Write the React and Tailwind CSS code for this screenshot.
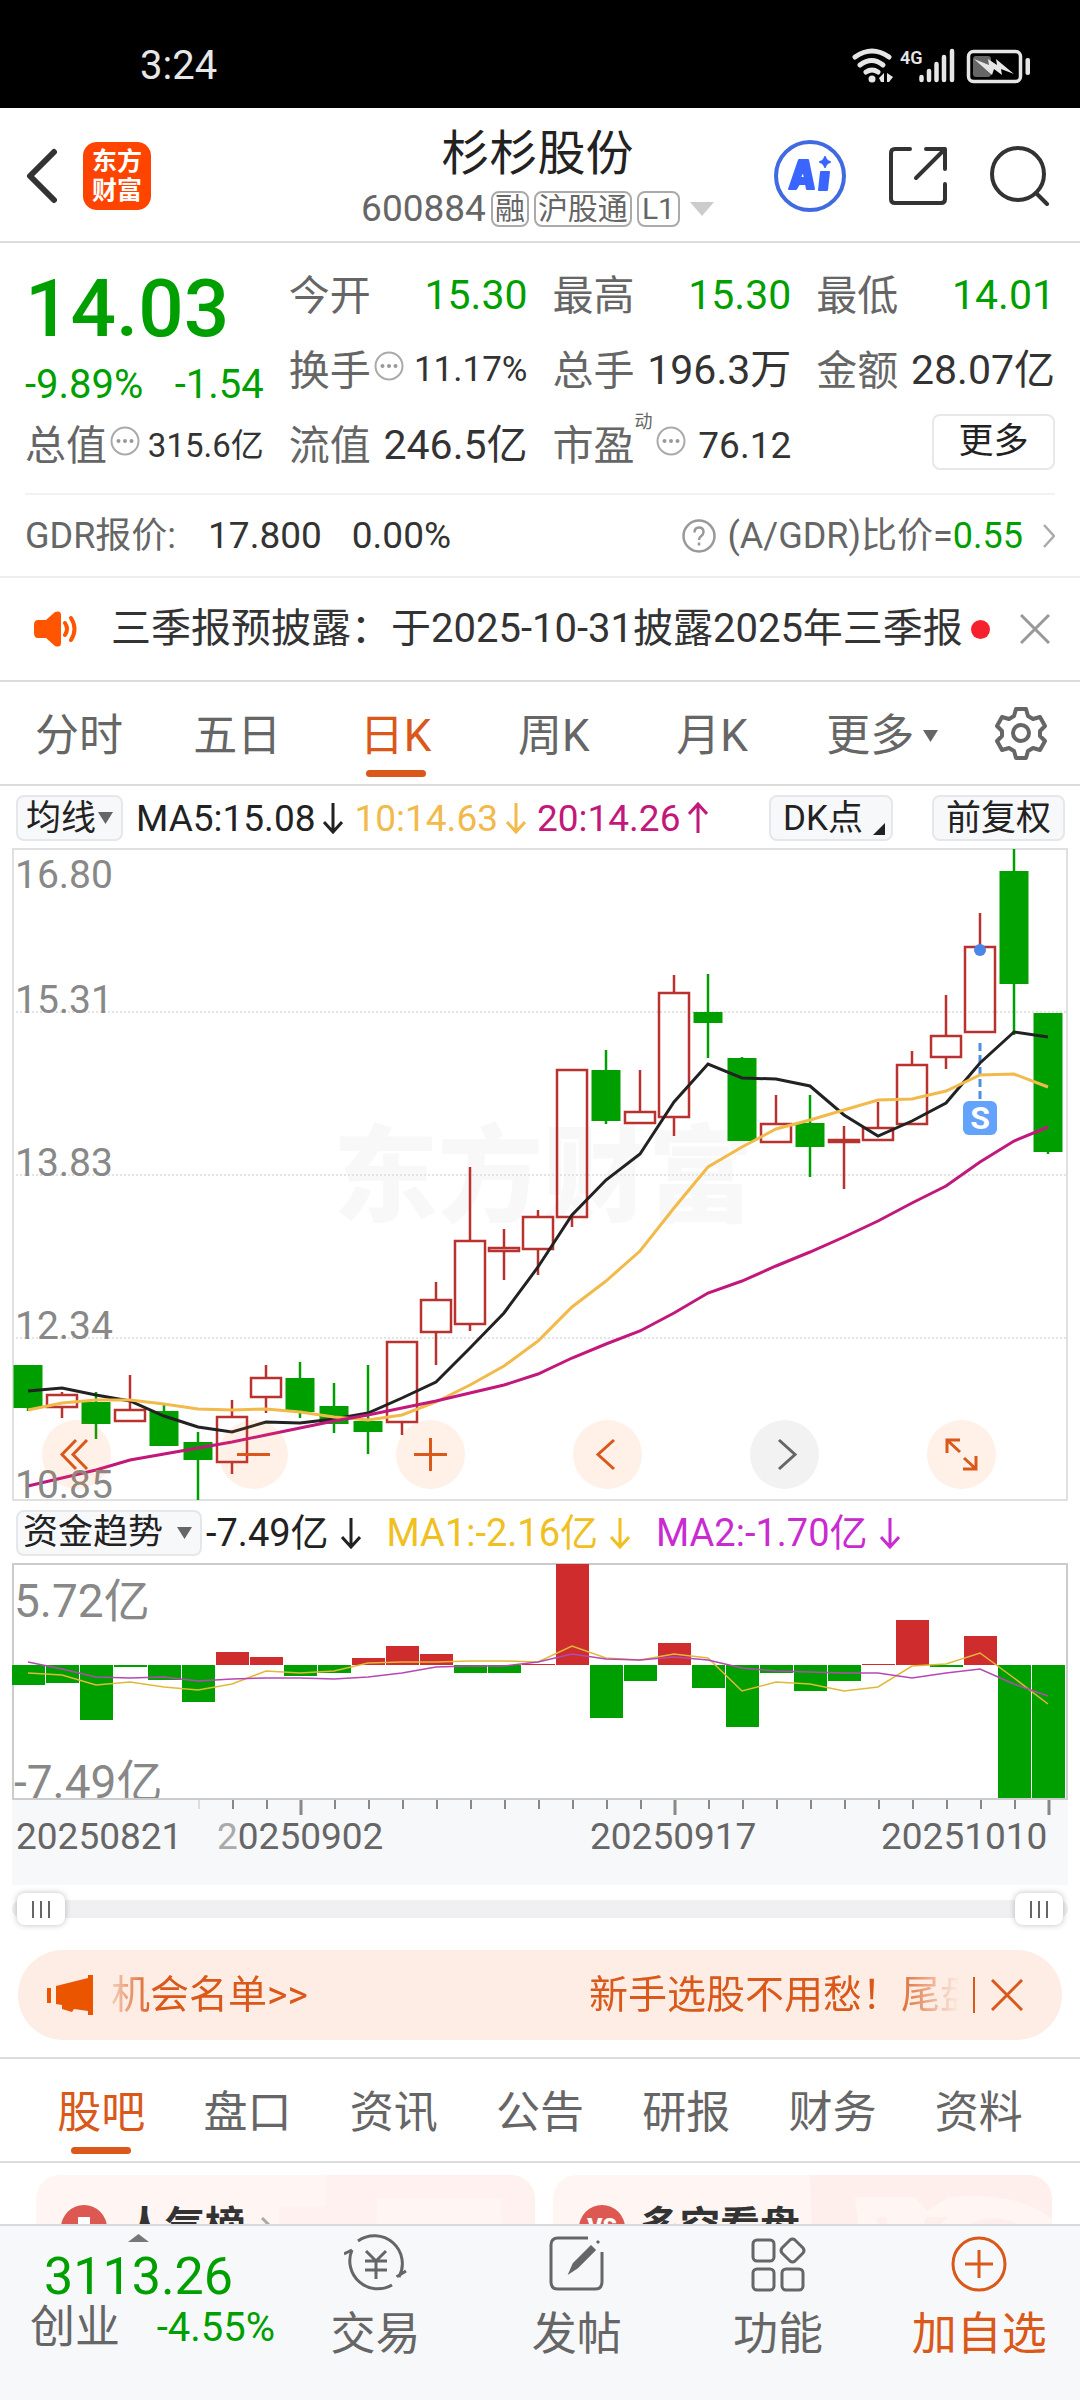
import { useState } from 'react';

const GREEN = '#009f00';
const RED = '#b8322f';

// [color, top, bottom, high, low] in chart pixels, one entry per trading day
const CANDLES = [
  ['g', 1365, 1408, 1365, 1411], ['r', 1395, 1407, 1392, 1418], ['g', 1402, 1424, 1392, 1439],
  ['r', 1410, 1421, 1375, 1421], ['g', 1411, 1446, 1405, 1446], ['g', 1442, 1460, 1432, 1500],
  ['r', 1417, 1462, 1400, 1474], ['r', 1378, 1397, 1365, 1413], ['g', 1378, 1412, 1362, 1418],
  ['g', 1406, 1424, 1383, 1433], ['g', 1421, 1432, 1365, 1454], ['r', 1342, 1422, 1342, 1435],
  ['r', 1300, 1332, 1282, 1365], ['r', 1241, 1324, 1167, 1331], ['r', 1248, 1251, 1229, 1280],
  ['r', 1217, 1249, 1210, 1275], ['r', 1070, 1217, 1070, 1227], ['g', 1070, 1121, 1050, 1124],
  ['r', 1112, 1123, 1070, 1123], ['r', 993, 1117, 975, 1136], ['g', 1012, 1023, 974, 1058],
  ['g', 1058, 1141, 1057, 1141], ['r', 1124, 1142, 1095, 1142], ['g', 1123, 1147, 1095, 1177],
  ['r', 1140, 1142, 1126, 1189], ['r', 1128, 1140, 1102, 1140], ['r', 1065, 1124, 1051, 1124],
  ['r', 1036, 1057, 995, 1069], ['r', 947, 1032, 913, 1032], ['g', 871, 984, 849, 1035],
  ['g', 1013, 1152, 1013, 1154],
];
const MA5 = [1391, 1388, 1395, 1401, 1416, 1427, 1432, 1422, 1423, 1419, 1413, 1398, 1382, 1348, 1313, 1267, 1215, 1180, 1154, 1102, 1064, 1078, 1079, 1086, 1115, 1136, 1121, 1103, 1063, 1032, 1037];
const MA10 = [1410, 1403, 1400, 1400, 1404, 1409, 1410, 1409, 1412, 1417, 1420, 1415, 1402, 1385, 1366, 1341, 1307, 1281, 1251, 1208, 1167, 1147, 1129, 1120, 1110, 1100, 1099, 1091, 1075, 1074, 1087];
const MA20 = [1486, 1478, 1470, 1460, 1454, 1448, 1442, 1435, 1428, 1421, 1415, 1408, 1401, 1393, 1385, 1374, 1358, 1344, 1331, 1313, 1293, 1281, 1266, 1252, 1237, 1221, 1203, 1186, 1162, 1141, 1127];

const FLOW = [1685, 1683, 1720, 1667, 1680, 1702, 1652, 1657, 1676, 1673, 1658, 1646, 1654, 1673, 1673, 1664, 1564, 1718, 1681, 1643, 1688, 1727, 1673, 1691, 1681, 1664, 1620, 1667, 1636, 1798, 1798];
const FLOW_MA1 = [1673, 1675, 1685, 1682, 1687, 1690, 1684, 1671, 1673, 1671, 1663, 1662, 1662, 1661, 1661, 1662, 1646, 1658, 1660, 1654, 1658, 1691, 1682, 1684, 1691, 1687, 1666, 1664, 1653, 1678, 1704];
const FLOW_MA2 = [1662, 1669, 1677, 1678, 1677, 1681, 1679, 1678, 1678, 1679, 1677, 1673, 1667, 1666, 1666, 1662, 1654, 1659, 1660, 1657, 1660, 1668, 1671, 1672, 1673, 1673, 1678, 1673, 1669, 1684, 1696];

const PERIODS = ['分时', '五日', '日K', '周K', '月K'];
const SECTIONS = ['股吧', '盘口', '资讯', '公告', '研报', '财务', '资料'];
const ZERO = 1665;

const x = (i) => 28 + 34 * i;
const line = (ys) => ys.map((y, i) => `${x(i)},${y}`).join(' ');

const TOOL_BTN = 'rounded-lg border-2 border-[#e6e7ea] bg-[#f7f8fa] h-[46px] flex items-center text-[35px] leading-none text-[#222]';

function Arrow({ up = false }) {
  return (
    <svg width="20" height="32" viewBox="0 0 20 32" fill="none" stroke="currentColor" strokeWidth="3">
      {up ? <path d="M10 31V2M1 12l9-10 9 10" /> : <path d="M10 1v29M1 20l9 10 9-10" />}
    </svg>
  );
}

function Caret() {
  return (
    <svg width="15" height="12" viewBox="0 0 15 12" fill="#666">
      <path d="M0 0h15L7.500 12z" />
    </svg>
  );
}

function Dots() {
  return (
    <svg className="shrink-0 self-start mt-1 ml-[3px]" width="30" height="30" viewBox="0 0 30 30">
      <circle cx="15" cy="15" r="13.500" fill="none" stroke="#aaa" strokeWidth="2" />
      <g fill="#999">
        <circle cx="8.500" cy="15" r="2" />
        <circle cx="15" cy="15" r="2" />
        <circle cx="21.500" cy="15" r="2" />
      </g>
    </svg>
  );
}

function StatusBar() {
  return (
    <div className="h-[108px] shrink-0 bg-black text-[#e6e6e6] flex items-center justify-between pl-[140px] pr-[48px] pt-[24px]">
      <span className="text-[40px] leading-none">3:24</span>
      <svg width="180" height="38" viewBox="852 46 180 38">
        <g fill="none" stroke="#e6e6e6" strokeWidth="5" strokeLinecap="round">
          <path d="M855 56q17-12 34 0" />
          <path d="M860 64q12-9 23 0" />
          <path d="M866 71q6-4 12 0" />
        </g>
        <circle cx="872" cy="78" r="3.500" fill="#e6e6e6" />
        <path d="M879 77l5-5v9h-3zM887 72l6 4-4 5h-2z" fill="#e6e6e6" />
        <text x="900" y="63" fontSize="18" fontWeight="600" fill="#e6e6e6">4G</text>
        <g stroke="#e6e6e6" strokeWidth="4.500" strokeLinecap="round">
          <path d="M921.500 76v3M929 70v9M936.500 63v16M944 56v23M952 50v29" />
        </g>
        <rect x="968.500" y="50.500" width="52" height="30" rx="5" fill="none" stroke="#e6e6e6" strokeWidth="3.500" />
        <rect x="973" y="55" width="18" height="21" rx="3" fill="#666" />
        <path d="M974 58l15 6-1-6 9 6-1-6 18 15-13-5 1 6-8-6-2 6z" fill="#e6e6e6" />
        <rect x="1025.500" y="57" width="4.500" height="17" rx="2" fill="#e6e6e6" />
      </svg>
    </div>
  );
}

function Header() {
  return (
    <header className="h-[135px] shrink-0 border-b-2 border-[#dcdcdc] grid grid-cols-[1fr_auto_1fr] items-center pt-[2px] pl-[25px] pr-[30px]">
      <div className="flex items-center gap-[25px]">
        <button type="button" aria-label="返回">
          <svg width="33" height="56" viewBox="0 0 33 56" fill="none" stroke="#333" strokeWidth="6" strokeLinecap="round" strokeLinejoin="round">
            <path d="M29 4L5 28l24 24" />
          </svg>
        </button>
        <a href="#home" className="size-[68px] rounded-[14px] bg-[#ff4400] text-white text-[25px] leading-[29px] font-bold flex flex-col items-center justify-center">
          <span>东方</span>
          <span>财富</span>
        </a>
      </div>
      <div className="flex flex-col items-center gap-[7px]">
        <h1 className="text-[48px] leading-[60px] text-[#222]">杉杉股份</h1>
        <div className="flex items-center gap-[5px] text-[#666] text-[30px] leading-[32px]">
          <span className="text-[37px]">600884</span>
          <span className="border-2 border-[#aaa] rounded-lg px-[2px]">融</span>
          <span className="border-2 border-[#aaa] rounded-lg px-[2px]">沪股通</span>
          <span className="border-2 border-[#aaa] rounded-lg px-[3px]">L1</span>
          <svg className="ml-[5px]" width="24" height="14" viewBox="0 0 24 14" fill="#ccc"><path d="M0 0h24L12 14z" /></svg>
        </div>
      </div>
      <div className="flex items-center justify-end gap-[43px]">
        <button type="button" aria-label="Ai">
          <svg width="72" height="72" viewBox="0 0 72 72">
            <circle cx="36" cy="36" r="34" fill="none" stroke="#4169e1" strokeWidth="4" />
            <g fill="#3a66ff" stroke="#3a66ff" strokeWidth="2" strokeLinejoin="round">
              <path fillRule="evenodd" d="M25 20h9l6 29h-7l-1-5h-7l-3 5h-7zM29 30l-3 8h5z" />
              <path d="M47 32h8l-2 18h-8z" />
              <path d="M51 17q1 4 5 5-4 1-5 5-1-4-5-5 4-1 5-5z" />
            </g>
          </svg>
        </button>
        <button type="button" aria-label="分享">
          <svg width="58" height="58" viewBox="0 0 58 58" fill="none" stroke="#333" strokeWidth="4" strokeLinecap="round" strokeLinejoin="round">
            <path d="M21 2H6q-4 0-4 4v46q0 4 4 4h46q4 0 4-4V37" />
            <path d="M37 2h19v20M54 4L27 31" />
          </svg>
        </button>
        <button type="button" aria-label="搜索">
          <svg width="60" height="60" viewBox="0 0 60 60" fill="none" stroke="#333" strokeWidth="4" strokeLinecap="round">
            <circle cx="28" cy="28" r="26" />
            <path d="M46 47l11 11" />
          </svg>
        </button>
      </div>
    </header>
  );
}

function Stat({ label, value, up = false, dots = false, size = 'text-[41px]' }) {
  return (
    <div className="flex items-center justify-between">
      <span className="flex items-center text-[41px] leading-[48px] text-[#666]">
        {label}
        {dots && <Dots />}
      </span>
      <span className={`${size} ${up ? 'text-[#009f00]' : 'text-[#333]'}`}>{value}</span>
    </div>
  );
}

function Quote() {
  return (
    <section className="shrink-0 px-[25px] pt-[15px]">
      <div className="grid grid-cols-4 gap-x-[25px] auto-rows-[75px] whitespace-nowrap pb-[10px] border-b-2 border-[#f2f2f2]">
        <div className="row-span-2 flex flex-col text-[#009f00]">
          <span className="text-[80px] leading-[102px] font-medium">14.03</span>
          <div className="flex justify-between text-[40px] leading-[50px]">
            <span>-9.89%</span>
            <span>-1.54</span>
          </div>
        </div>
        <Stat label="今开" value="15.30" up />
        <Stat label="最高" value="15.30" up />
        <Stat label="最低" value="14.01" up />
        <Stat label="换手" value="11.17%" dots size="text-[35px]" />
        <Stat label="总手" value="196.3万" />
        <Stat label="金额" value="28.07亿" />
        <Stat label="总值" value="315.6亿" dots size="text-[33px]" />
        <Stat label="流值" value="246.5亿" />
        <Stat label={<>市盈<sup className="text-[18px] leading-none self-start">动</sup></>} value="76.12" dots size="text-[37px]" />
        <div className="flex items-center justify-end pb-[8px]">
          <button type="button" className="h-[56px] w-[123px] rounded-lg border-2 border-[#e8e8ea] text-[35px] leading-none text-[#222]">更多</button>
        </div>
      </div>
      <div className="h-[81px] flex items-center justify-between text-[36px] text-[#666]">
        <div className="flex items-center">
          <span>GDR报价:</span>
          <span className="ml-[32px] text-[37px] text-[#333]">17.800</span>
          <span className="ml-[30px] text-[37px] text-[#333]">0.00%</span>
        </div>
        <a href="#gdr" className="flex items-center">
          <svg className="mr-3" width="34" height="34" viewBox="0 0 34 34" fill="none" stroke="#999" strokeWidth="2.500">
            <circle cx="17" cy="17" r="15.500" />
            <path d="M12.500 13.500q0-5 4.500-5t4.500 4.500q0 2.500-2.500 4.200Q17 18.500 17 21M17 23.500v3" />
          </svg>
          <span>(A/GDR)比价=</span>
          <span className="text-[#009f00]">0.55</span>
          <svg className="ml-[20px]" width="12" height="24" viewBox="0 0 12 24" fill="none" stroke="#aaa" strokeWidth="2.500"><path d="M1 1l10 11L1 23" /></svg>
        </a>
      </div>
    </section>
  );
}

function Notice() {
  return (
    <section className="h-[106px] shrink-0 border-t-2 border-b-2 border-t-[#eee] border-b-[#dcdcdc] flex items-center pl-[34px] pr-[30px]">
      <svg width="44" height="36" viewBox="0 0 44 36" fill="#ff5500">
        <path d="M4 9h8l9-8q6-2 6 3v28q0 5-6 3l-9-8H4q-4 0-4-5v-8q0-5 4-5z" />
        <g fill="none" stroke="#ff5500" strokeWidth="4" strokeLinecap="round">
          <path d="M31 12q4 6 0 12M37 7q7 11 0 22" />
        </g>
      </svg>
      <a href="#notice" className="ml-[33px] text-[40px] text-[#333] whitespace-nowrap">三季报预披露：于2025-10-31披露2025年三季报</a>
      <span className="ml-auto size-[19px] rounded-full bg-[#f5222d]" />
      <button type="button" aria-label="关闭提示" className="ml-[30px]">
        <svg width="30" height="30" viewBox="0 0 30 30" stroke="#999" strokeWidth="3"><path d="M1 1l28 28M29 1L1 29" /></svg>
      </button>
    </section>
  );
}

function PeriodTabs() {
  const [active, setActive] = useState('日K');
  return (
    <nav className="h-[104px] shrink-0 border-b-2 border-[#dcdcdc] flex text-[44px] text-[#666]">
      {PERIODS.map((p) => (
        <button key={p} type="button" onClick={() => setActive(p)} className={`flex-[4] flex flex-col items-center justify-end pb-[7px] ${active === p ? 'text-[#d9581a]' : ''}`}>
          <span className="leading-[60px] mb-[4px]">{p}</span>
          <span className={`h-[7px] w-[60px] rounded-full ${active === p ? 'bg-[#d9581a]' : ''}`} />
        </button>
      ))}
      <button type="button" className="flex-[4] flex items-center justify-center gap-[9px] pl-[12px] pt-[6px]">更多<Caret /></button>
      <button type="button" aria-label="设置" className="flex-[3] flex items-center justify-center">
        <svg width="54" height="54" viewBox="0 0 54 54" fill="none" stroke="#666" strokeWidth="4" strokeLinejoin="round">
          <path d="M22 3h10l2 7 5 3 7-2 5 9-5 5v5l5 5-5 9-7-2-5 3-2 7H22l-2-7-5-3-7 2-5-9 5-5v-5l-5-5 5-9 7 2 5-3z" />
          <circle cx="27" cy="27" r="8" />
        </svg>
      </button>
    </nav>
  );
}

function PriceChart() {
  return (
    <svg className="block w-full" viewBox="12 848 1056 653" role="img" aria-label="日K">
      <text x="333" y="1213" fontSize="105" fontWeight="900" fill="#f8f8f8">东方财富</text>
      <g stroke="#e4e4e4" strokeWidth="2" strokeDasharray="2 2">
        <path d="M12 1012H1067M12 1175H1067M12 1338H1067" />
      </g>
      <rect x="13" y="849" width="1054" height="651" fill="none" stroke="#e0e0e0" strokeWidth="2" />
      {CANDLES.map(([c, top, bottom, high, low], i) => (
        <g key={i} stroke={c === 'g' ? GREEN : RED} strokeWidth="2.500">
          <path d={`M${x(i)} ${high}V${top}M${x(i)} ${bottom}V${low}`} />
          {c === 'g' ? (
            <rect x={x(i) - 14.5} y={top} width="29" height={bottom - top} fill={GREEN} stroke="none" />
          ) : (
            <rect x={x(i) - 15} y={top} width="30" height={bottom - top} fill="none" />
          )}
        </g>
      ))}
      <path d="M980 1043V1100" stroke="#4d8fe0" strokeWidth="3" strokeDasharray="8 4" />
      <g fill="none" strokeWidth="3">
        <polyline points={line(MA5)} stroke="#222" />
        <polyline points={line(MA10)} stroke="#f2b94b" />
        <polyline points={line(MA20)} stroke="#c2187c" />
      </g>
      <circle cx="980" cy="950" r="6" fill="#4a86e8" />
      <rect x="963" y="1101" width="34" height="34" rx="6" fill="#63a3fb" />
      <text x="980" y="1129" fontSize="32" fontWeight="700" textAnchor="middle" fill="#fff">S</text>
      <g fontSize="39" fill="#888">
        <text x="15" y="888">16.80</text>
        <text x="15" y="1013">15.31</text>
        <text x="15" y="1176">13.83</text>
        <text x="15" y="1339">12.34</text>
        <text x="15" y="1498">10.85</text>
      </g>
    </svg>
  );
}

const CONTROLS = [
  ['快退', 'M34 20L20 34.500l14 14.500M45 20L31 34.500 45 49'],
  ['缩小', 'M18 34.500h33'],
  ['放大', 'M18 34.500h33M34.500 18v33'],
  ['左移', 'M41 20L25 34.500 41 49'],
  ['右移', 'M29 20l16 14.500L29 49'],
  ['全屏', 'M33 20H20v13M20 20l13 12M36 49h13V36M49 49L37 38'],
];

function FlowChart() {
  return (
    <svg className="block w-full" viewBox="12 1563 1056 322" role="img" aria-label="资金趋势">
      <g fontSize="46" fill="#888">
        <text x="14" y="1617">5.72亿</text>
        <text x="14" y="1798">-7.49亿</text>
      </g>
      <rect x="12" y="1799" width="1056" height="86" fill="#f7f8fa" />
      <rect x="13" y="1564" width="1054" height="235" fill="none" stroke="#ccc" strokeWidth="2" />
      {FLOW.map((y, i) => (
        <rect key={i} x={x(i) - 16} y={Math.min(y, ZERO)} width="33" height={Math.abs(y - ZERO)} fill={y < ZERO ? '#cf2d2d' : GREEN} />
      ))}
      <g fill="none" strokeWidth="1.500">
        <polyline points={line(FLOW_MA1)} stroke="#e0b93a" />
        <polyline points={line(FLOW_MA2)} stroke="#b548b5" />
      </g>
      {FLOW.map((_, i) => {
        if (i < 5) return null;
        const major = [8, 19, 30].includes(i);
        return <path key={i} d={`M${x(i) + 1} 1800V${major ? 1815 : 1809}`} stroke={i === 5 ? '#ddd' : '#888'} strokeWidth={major ? 3 : 2} />;
      })}
      <g fontSize="37" fill="#666">
        <text x="16" y="1849">20250821</text>
        <text x="217" y="1849"><tspan fill="#aaa">2</tspan>0250902</text>
        <text x="590" y="1849">20250917</text>
        <text x="881" y="1849">20251010</text>
      </g>
    </svg>
  );
}

const RANGE = 'col-start-1 row-start-1 w-full h-[32px] appearance-none bg-transparent pointer-events-none [&::-webkit-slider-thumb]:pointer-events-auto [&::-webkit-slider-thumb]:appearance-none [&::-webkit-slider-thumb]:w-[48px] [&::-webkit-slider-thumb]:h-[32px] [&::-webkit-slider-thumb]:rounded-lg [&::-webkit-slider-thumb]:bg-white [&::-webkit-slider-thumb]:shadow-[0_0_6px_rgba(0,0,0,0.25)] [&::-webkit-slider-thumb]:bg-[repeating-linear-gradient(90deg,#666_0_2px,#fff_2px_8px)] [&::-webkit-slider-thumb]:bg-[length:18px_17px] [&::-webkit-slider-thumb]:bg-no-repeat [&::-webkit-slider-thumb]:bg-center';

function RangeBar() {
  const [range, setRange] = useState([0, 100]);
  return (
    <div className="mx-3 mt-[6px] h-[36px] grid items-center">
      <span className="col-start-1 row-start-1 h-[18px] rounded-full bg-[#f0f0f2]" />
      <div className="col-start-1 row-start-1 px-[5px] grid">
        <input type="range" aria-label="开始日期" className={RANGE} value={range[0]} onChange={(e) => setRange([+e.target.value, range[1]])} />
        <input type="range" aria-label="结束日期" className={RANGE} value={range[1]} onChange={(e) => setRange([range[0], +e.target.value])} />
      </div>
    </div>
  );
}

function Charts() {
  return (
    <section className="shrink-0 whitespace-nowrap">
      <div className="h-[62px] pt-[2px] pl-[16px] pr-[15px] flex items-center text-[37px] leading-none">
        <button type="button" className={`${TOOL_BTN} px-[8px] gap-[2px]`}>均线<Caret /></button>
        <span className="ml-[13px] flex items-center gap-[8px] text-[#222]">MA5:15.08<Arrow /></span>
        <span className="ml-[11px] flex items-center gap-[8px] text-[#f2b94b]">10:14.63<Arrow /></span>
        <span className="ml-[11px] flex items-center gap-[8px] text-[#c2187c]">20:14.26<Arrow up /></span>
        <button type="button" className={`${TOOL_BTN} ml-auto pl-[12px] pr-[6px] gap-[10px]`}>
          DK点
          <svg className="self-end mb-1" width="12" height="12" viewBox="0 0 12 12"><path d="M12 0v12H0z" fill="#222" /></svg>
        </button>
        <button type="button" className={`${TOOL_BTN} ml-[39px] px-[12px]`}>前复权</button>
      </div>
      <div className="relative px-3">
        <PriceChart />
        <div className="absolute bottom-[12px] left-[42px] right-[84px] flex justify-between">
          {CONTROLS.map(([label, d]) => (
            <button key={label} type="button" aria-label={label} className={`size-[69px] rounded-full ${label === '右移' ? 'bg-black/5 text-[#666]' : 'bg-[#ff6a1e]/10 text-[#d9581a]'}`}>
              <svg width="69" height="69" viewBox="0 0 69 69" fill="none" stroke="currentColor" strokeWidth="3"><path d={d} /></svg>
            </button>
          ))}
        </div>
      </div>
      <div className="h-[62px] pl-[16px] pt-px flex items-center text-[38px] leading-none">
        <button type="button" className={`${TOOL_BTN} pl-[5px] pr-[8px] gap-[14px]`}>资金趋势<Caret /></button>
        <span className="ml-[4px] flex items-center gap-[12px] text-[#222]">-7.49亿<Arrow /></span>
        <span className="ml-[26px] flex items-center gap-[12px] text-[#efc01f]">MA1:-2.16亿<Arrow /></span>
        <span className="ml-[26px] flex items-center gap-[12px] text-[#c92bd1]">MA2:-1.70亿<Arrow /></span>
      </div>
      <div className="px-3">
        <FlowChart />
      </div>
      <RangeBar />
    </section>
  );
}

function Promo() {
  return (
    <div className="shrink-0 mt-[23px] mb-[17px] mx-[18px] h-[90px] rounded-full bg-[#fdede4] text-[#d9581a] text-[39px] flex items-center pl-[29px] pr-[39px] whitespace-nowrap">
      <svg width="47" height="40" viewBox="0 0 47 40" fill="#eb5500">
        <path d="M0 13h4v15H0zM9 11L41 3V0h5v40h-5v-4l-14-2-2 3-10-3v-4l-6-1z" />
      </svg>
      <a href="#promo" className="ml-[17px] flex-1 flex overflow-hidden [mask-image:linear-gradient(90deg,rgba(0,0,0,0.2),#000_5%,#000_92%,transparent)]">
        <span className="flex-1">机会名单&gt;&gt;</span>
        <span className="-mr-5">新手选股不用愁！尾盘</span>
      </a>
      <span className="ml-[14px] w-[2px] h-[36px] bg-[#d9581a]" />
      <button type="button" aria-label="关闭广告" className="ml-[16px]">
        <svg width="32" height="32" viewBox="0 0 32 32" stroke="currentColor" strokeWidth="3"><path d="M1 1l30 30M31 1L1 31" /></svg>
      </button>
    </div>
  );
}

function SectionTabs() {
  const [active, setActive] = useState('股吧');
  return (
    <nav className="h-[106px] shrink-0 border-y-2 border-[#dcdcdc] px-[28px] flex text-[44px] text-[#666]">
      {SECTIONS.map((s) => (
        <button key={s} type="button" onClick={() => setActive(s)} className={`flex-1 flex flex-col items-center justify-end pb-[7px] ${active === s ? 'text-[#d9581a]' : ''}`}>
          <span className="leading-[60px] mb-[4px]">{s}</span>
          <span className={`h-[7px] w-[60px] rounded-full ${active === s ? 'bg-[#d9581a]' : ''}`} />
        </button>
      ))}
    </nav>
  );
}

function Cards() {
  return (
    <div className="flex gap-[18px] pl-[36px] pr-[28px] pt-[12px] text-[#333] text-[40px] leading-[48px] font-bold">
      <a href="#rank" className="relative flex-1 h-[160px] rounded-[24px] overflow-hidden bg-[#fff6f4] flex items-start pl-[25px] pt-[28px]">
        <svg className="absolute right-0 top-0" width="256" height="160" viewBox="0 0 256 160">
          <path d="M47 0h209v160H0V32h46z" fill="#fef1ef" />
          <path d="M98 24h124l2 136H96z" fill="#fff6f4" />
        </svg>
        <svg className="relative mt-[2px]" width="46" height="46" viewBox="0 0 46 46">
          <circle cx="23" cy="23" r="23" fill="#dc5850" />
          <path d="M17 12h12v12h8v14H9V24h8z" fill="#fff" />
        </svg>
        <span className="relative ml-[18px]">人气榜</span>
        <svg className="relative ml-[15px] mt-[14px]" width="16" height="26" viewBox="0 0 16 26" fill="none" stroke="#aaa" strokeWidth="3"><path d="M2 1l12 12L2 25" /></svg>
      </a>
      <a href="#vote" className="relative flex-1 h-[160px] rounded-[24px] overflow-hidden bg-[#fff6f4] flex items-start pl-[25px] pt-[28px]">
        <svg className="absolute right-0 top-0" width="242" height="160" viewBox="0 0 242 160">
          <path d="M0 0h242v160H6z" fill="#feeeec" />
          <path d="M45 22h60l12 14 22-14q70-6 103 22v116H60z" fill="#fff6f4" />
          <path d="M67 42h10v20H68zM116 42h22l-20 20h-8zM160 50q20-14 50 0v20h-50z" fill="#feeeec" />
        </svg>
        <svg className="relative mt-[2px]" width="48" height="46" viewBox="0 0 48 46">
          <circle cx="24" cy="23" r="23" fill="#dc5850" />
          <text x="24" y="30" textAnchor="middle" fontSize="23" fontWeight="900" fill="#fff">VS</text>
        </svg>
        <span className="relative ml-[14px]">多空看盘</span>
      </a>
    </div>
  );
}

const NAV_ITEMS = [
  {
    label: '交易',
    icon: (
      <>
        <path d="M14 7A28 28 0 0 1 55 43M55 43l-1-1 8-5M48 51A28 28 0 0 1 8 16M8 16l-8 4" />
        <path d="M22 17l10 10 10-10M21 27h22M21 36h22M32 27v18" />
      </>
    ),
  },
  {
    label: '发帖',
    icon: (
      <>
        <path d="M43 4H13q-7 0-7 7v37q0 7 7 7h37q7 0 7-7V18" />
        <path d="M26 37l3-7 17-17 3 3-17 17zM52 9l2-2" fill="#666" />
      </>
    ),
  },
  {
    label: '功能',
    icon: (
      <g transform="translate(1 1)">
        <rect x="6" y="5" width="21" height="21" rx="4" />
        <rect x="6" y="34" width="21" height="21" rx="4" />
        <rect x="35" y="34" width="21" height="21" rx="4" />
        <path d="M43 5q2.500-2 5 0l8 8q2 2.500 0 5l-8 8q-2.500 2-5 0l-8-8q-2-2.500 0-5z" />
      </g>
    ),
  },
  {
    label: '加自选',
    accent: true,
    icon: (
      <>
        <circle cx="32" cy="30" r="26" />
        <path d="M18 30h28M32 16v28" />
      </>
    ),
  },
];

function BottomNav() {
  return (
    <nav className="shrink-0 h-[176px] border-t-2 border-[#d8dade] bg-[#f7f8fa] flex text-[45px] text-[#666] whitespace-nowrap">
      <a href="#index" className="w-[275px] flex flex-col pt-[8px]">
        <svg className="ml-[128px]" width="21" height="8" viewBox="0 0 21 8" fill="#777"><path d="M10.500 0L21 8H0z" /></svg>
        <span className="ml-[44px] mt-[8px] text-[52px] leading-[54px] text-[#009f00]">3113.26</span>
        <span className="ml-[30px] flex items-center justify-between leading-[48px]">
          创业
          <span className="text-[40px] text-[#009f00]">-4.55%</span>
        </span>
      </a>
      {NAV_ITEMS.map(({ label, icon, accent }) => (
        <button key={label} type="button" className={`flex-1 flex flex-col items-center pt-[8px] gap-[11px] ${accent ? 'text-[#d9581a]' : ''}`}>
          <svg width="64" height="60" viewBox="0 0 64 60" fill="none" stroke="currentColor" strokeWidth="3">{icon}</svg>
          <span className="leading-[60px]">{label}</span>
        </button>
      ))}
    </nav>
  );
}

export default function App() {
  return (
    <div className="h-screen flex flex-col bg-white overflow-hidden font-['Roboto','Noto_Sans_CJK_SC',sans-serif]">
      <StatusBar />
      <Header />
      <main className="flex-1 min-h-0 flex flex-col overflow-y-auto [scrollbar-width:none]">
        <Quote />
        <Notice />
        <PeriodTabs />
        <Charts />
        <Promo />
        <SectionTabs />
        <Cards />
      </main>
      <BottomNav />
    </div>
  );
}
